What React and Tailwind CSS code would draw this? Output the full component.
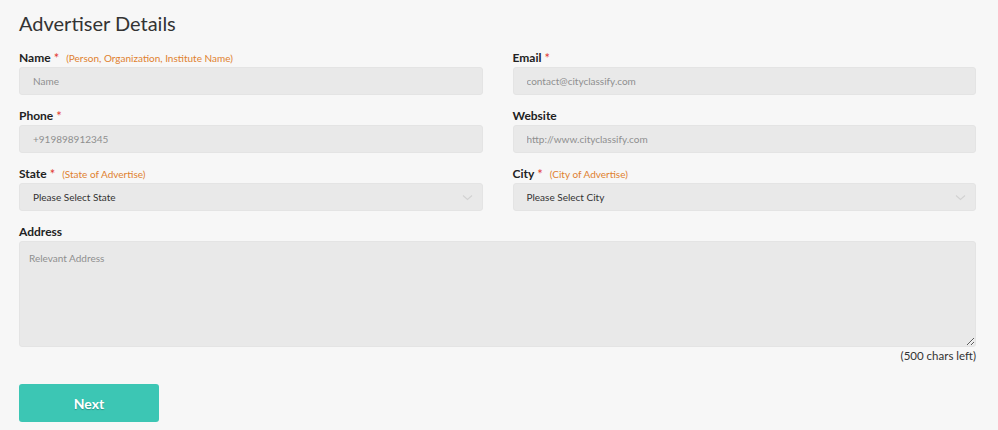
import React, { useState } from "react";

const Label = ({ text, required, hint }) => (
  <div className="flex items-center h-[16px] mb-px">
    <span className="text-[12px] font-bold text-[#222]">{text}</span>
    {required && <span className="text-[13px] leading-[16px] text-[#e23a30] ml-[3px]">*</span>}
    {hint && <span className="text-[10px] text-[#e0812f] ml-[7px]">{hint}</span>}
  </div>
);

const Input = ({ placeholder }) => (
  <input
    className="w-full h-[28px] rounded-[3px] bg-[#e9e9e9] border border-[#e4e4e4] px-[13px] text-[10px] text-[#333] placeholder:text-[#8f8f8f] outline-none"
    placeholder={placeholder}
  />
);

const Select = ({ text }) => (
  <div className="w-full h-[28px] rounded-[3px] bg-[#e9e9e9] border border-[#e4e4e4] pl-[13px] pr-[9px] flex items-center justify-between">
    <span className="text-[10px] text-[#333]">{text}</span>
    <svg width="11" height="7" viewBox="0 0 11 7" fill="none">
      <path d="M1 1.5 L5.5 5.5 L10 1.5" stroke="#d2d2d2" strokeWidth="1.1" />
    </svg>
  </div>
);

export default function App() {
  const [address, setAddress] = useState("");

  return (
    <div className="w-[998px] h-[430px] overflow-hidden bg-[#f7f7f7] font-['Lato','Open_Sans',sans-serif] text-[#333]">
      <div className="pl-[19px] pr-[22px] pt-[11px]">
        <h1 className="text-[20px] leading-[24px] text-[#333] font-normal">Advertiser Details</h1>

        <div className="grid grid-cols-2 gap-x-[30px] gap-y-[13px] mt-[15px]">
          <div>
            <Label text="Name" required hint="(Person, Organization, Institute Name)" />
            <Input placeholder="Name" />
          </div>
          <div>
            <Label text="Email" required />
            <Input placeholder="contact@cityclassify.com" />
          </div>
          <div>
            <Label text="Phone" required />
            <Input placeholder="+919898912345" />
          </div>
          <div>
            <Label text="Website" />
            <Input placeholder="http://www.cityclassify.com" />
          </div>
          <div>
            <Label text="State" required hint="(State of Advertise)" />
            <Select text="Please Select State" />
          </div>
          <div>
            <Label text="City" required hint="(City of Advertise)" />
            <Select text="Please Select City" />
          </div>
          <div className="col-span-2">
            <Label text="Address" />
            <textarea
              value={address}
              onChange={(e) => setAddress(e.target.value.slice(0, 500))}
              className="block w-full h-[106px] rounded-[3px] bg-[#e9e9e9] border border-[#e4e4e4] px-[9px] py-[9px] text-[10px] text-[#333] placeholder:text-[#8f8f8f] outline-none resize-y"
              placeholder="Relevant Address"
            />
            <div className="text-right text-[11.5px] text-[#333] leading-[14px] mt-[2px]">
              ({500 - address.length} chars left)
            </div>
          </div>
        </div>

        <button className="mt-[21px] w-[140px] h-[38px] rounded-[3px] bg-[#3cc6b4] text-white font-bold text-[14px] [text-shadow:0_1px_1px_rgba(0,0,0,0.25)]">
          Next
        </button>
      </div>
    </div>
  );
}
